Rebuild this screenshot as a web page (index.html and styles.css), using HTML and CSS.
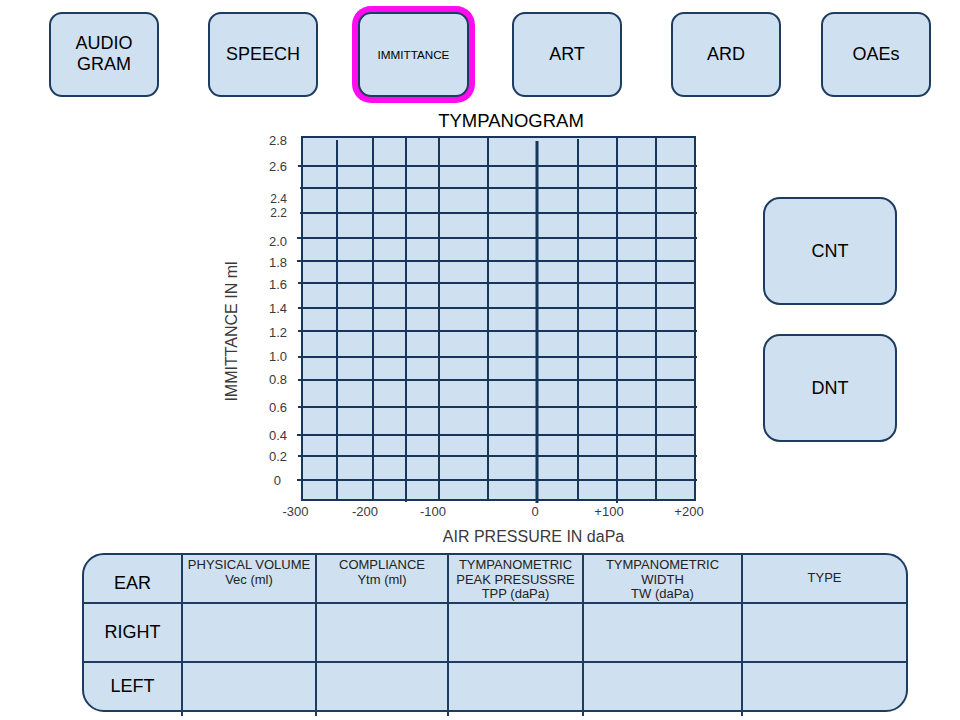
FILE: index.html
```html
<!DOCTYPE html>
<html lang="en">
<head>
<meta charset="utf-8">
<title>Immittance</title>
<link rel="stylesheet" href="styles.css">
</head>
<body>
<nav class="tabs">
  <div class="tab tab-audio">AUDIO<br>GRAM</div>
  <div class="tab tab-speech">SPEECH</div>
  <div class="tab tab-active">IMMITTANCE</div>
  <div class="tab tab-art">ART</div>
  <div class="tab tab-ard">ARD</div>
  <div class="tab tab-oae">OAEs</div>
</nav>
<main class="main">
  <svg class="chart" viewBox="220 103 490 445" width="490" height="445">
    <text class="chart-title" x="511" y="127" text-anchor="middle">TYMPANOGRAM</text>
    <rect class="plot" x="302" y="137" width="393" height="363"/>
    <path class="grid" d="M298 166H697M300 188H697M300 213H697M297 238H697M297 261H695M298 283H695M298 308H695M298 331H697M298 357H697M298 380H695M298 407H697M297 435H695M298 456H697M297 480H697"/>
    <path class="grid" d="M337 140V500M373 137V500M406 137V502M439 137V500M488 137V500M578 139V500M617 137V503M656 137V500"/>
    <path class="grid zero" d="M537 141V503"/>
    <rect class="frame" x="302" y="137" width="393" height="363"/>
    <g class="ytick" text-anchor="end">
      <text x="287" y="144.5">2.8</text>
      <text x="287" y="170.5">2.6</text>
      <text class="tight" x="287" y="202.5">2.4</text>
      <text class="tight" x="287" y="217">2.2</text>
      <text x="287" y="246">2.0</text>
      <text x="287" y="266.5">1.8</text>
      <text x="287" y="289">1.6</text>
      <text x="287" y="313">1.4</text>
      <text x="287" y="337">1.2</text>
      <text x="287" y="360.5">1.0</text>
      <text x="287" y="383.5">0.8</text>
      <text x="287" y="412">0.6</text>
      <text x="287" y="439.5">0.4</text>
      <text x="287" y="460.5">0.2</text>
      <text x="281" y="484.5">0</text>
    </g>
    <g class="xtick" text-anchor="middle">
      <text x="295.5" y="516">-300</text>
      <text x="365" y="516">-200</text>
      <text x="433" y="516">-100</text>
      <text x="535" y="516">0</text>
      <text x="609" y="516">+100</text>
      <text x="689" y="516">+200</text>
    </g>
    <text class="axis-title" x="533.5" y="541.5" text-anchor="middle">AIR PRESSURE IN daPa</text>
    <text class="axis-title" x="237" y="331.5" text-anchor="middle" transform="rotate(-90 237 331.5)">IMMITTANCE IN ml</text>
  </svg>
  <aside class="side">
    <div class="side-btn">CNT</div>
    <div class="side-btn">DNT</div>
  </aside>
</main>
<section class="results">
  <div class="cell ear head-ear">EAR</div>
  <div class="cell head">PHYSICAL VOLUME<br>Vec (ml)</div>
  <div class="cell head">COMPLIANCE<br>Ytm (ml)</div>
  <div class="cell head">TYMPANOMETRIC<br>PEAK PRESUSSRE<br>TPP (daPa)</div>
  <div class="cell head">TYMPANOMETRIC<br>WIDTH<br>TW (daPa)</div>
  <div class="cell head head-type">TYPE</div>

  <div class="cell ear row">RIGHT</div>
  <div class="cell row"></div>
  <div class="cell row"></div>
  <div class="cell row"></div>
  <div class="cell row"></div>
  <div class="cell row"></div>

  <div class="cell ear row">LEFT</div>
  <div class="cell row last"></div>
  <div class="cell row last"></div>
  <div class="cell row last"></div>
  <div class="cell row last"></div>
  <div class="cell row last"></div>
</section>
</body>
</html>
```

FILE: styles.css
```css
* { box-sizing: border-box; }

html, body {
  margin: 0;
  padding: 0;
  background: #ffffff;
}

body {
  width: 960px;
  height: 720px;
  overflow: hidden;
  font-family: "Liberation Sans", Arial, sans-serif;
  color: #000;
}

/* ---------- top tabs ---------- */
.tabs {
  display: flex;
  align-items: center;
  height: 103px;
  padding: 5px 0 0 49px;
}

.tab {
  width: 110px;
  height: 85px;
  display: flex;
  align-items: center;
  justify-content: center;
  text-align: center;
  background: #cfe0f1;
  border: 2px solid #1d3c5f;
  border-radius: 13px;
  font-size: 18px;
  line-height: 21px;
}

.tab-speech { margin-left: 49px; }
.tab-active {
  margin-left: 40px;
  width: 111px;
  font-size: 11.7px;
  box-shadow: 0 0 0 6px #ff0cf0;
}
.tab-art { margin-left: 43px; }
.tab-ard { margin-left: 49px; }
.tab-oae { margin-left: 40px; }

/* ---------- chart area ---------- */
.main {
  display: flex;
  align-items: flex-start;
  height: 450px;
}

.chart {
  display: block;
  margin-left: 220px;
  flex: none;
}

.chart-title {
  font-family: "Liberation Sans", Arial, sans-serif;
  font-size: 18.5px;
  fill: #000;
}

.plot {
  fill: #cfe0f1;
}

.frame {
  fill: none;
  stroke: #17365a;
  stroke-width: 2;
}

.grid {
  fill: none;
  stroke: #17365a;
  stroke-width: 2;
}

.grid.zero {
  stroke-width: 3;
}

.ytick, .xtick {
  font-family: "Liberation Sans", Arial, sans-serif;
  font-size: 13px;
  fill: #3a3a3a;
}

.ytick .tight {
  font-size: 12px;
}

.axis-title {
  font-family: "Liberation Sans", Arial, sans-serif;
  font-size: 16px;
  fill: #3a3a3a;
}

.side {
  display: flex;
  flex-direction: column;
  gap: 29px;
  margin: 94px 0 0 53px;
}

.side-btn {
  width: 134px;
  height: 108px;
  display: flex;
  align-items: center;
  justify-content: center;
  background: #cfe0f1;
  border: 2px solid #1d3c5f;
  border-radius: 17px;
  font-size: 18px;
}

/* ---------- results table ---------- */
.results {
  display: grid;
  grid-template-columns: 97px 134px 132px 135px 159px 1fr;
  grid-template-rows: 47px 59px 49px;
  width: 826px;
  height: 159px;
  margin-left: 82px;
  background: #cfe0f1;
  border: 2px solid #1d3c5f;
  border-radius: 22px;
}

.cell {
  border-left: 2px solid #1d3c5f;
  border-top: 2px solid #1d3c5f;
}

.cell.last {
  position: relative;
}

.cell.last::after {
  content: "";
  position: absolute;
  left: -2px;
  bottom: -6px;
  width: 2px;
  height: 6px;
  background: #1d3c5f;
}

.cell.ear {
  border-left: none;
  display: flex;
  align-items: center;
  justify-content: center;
  font-size: 18px;
}

.cell.head,
.cell.head-ear {
  border-top: none;
}

.head-ear {
  padding-top: 10px;
}

.head {
  padding-top: 3px;
  text-align: center;
  font-size: 13px;
  line-height: 14.5px;
  color: #222;
}

.head-type {
  display: flex;
  align-items: center;
  justify-content: center;
  padding-top: 0;
}
```
